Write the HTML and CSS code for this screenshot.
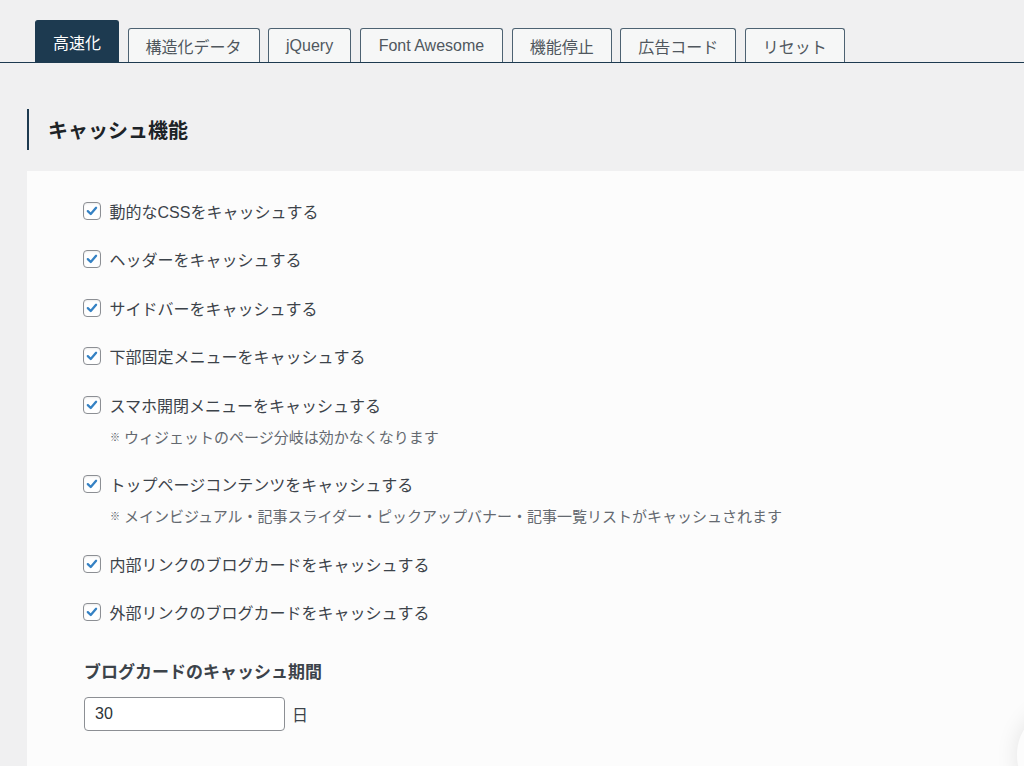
FILE: index.html
```html
<!DOCTYPE html>
<html lang="ja">
<head>
<meta charset="utf-8">
<title>キャッシュ機能</title>
<link rel="stylesheet" href="styles.css">
</head>
<body>
<nav class="tabs">
  <span class="tab is-active">高速化</span>
  <span class="tab">構造化データ</span>
  <span class="tab">jQuery</span>
  <span class="tab tab-wide">Font Awesome</span>
  <span class="tab">機能停止</span>
  <span class="tab">広告コード</span>
  <span class="tab">リセット</span>
</nav>

<h2 class="section-title">キャッシュ機能</h2>

<section class="panel">
  <div class="item">
    <label class="opt"><span class="cb"><svg viewBox="0 0 18 18"><path d="M4.3 9.2 L7.6 12.4 L13.6 5.4"/></svg></span>動的なCSSをキャッシュする</label>
  </div>
  <div class="item">
    <label class="opt"><span class="cb"><svg viewBox="0 0 18 18"><path d="M4.3 9.2 L7.6 12.4 L13.6 5.4"/></svg></span>ヘッダーをキャッシュする</label>
  </div>
  <div class="item">
    <label class="opt"><span class="cb"><svg viewBox="0 0 18 18"><path d="M4.3 9.2 L7.6 12.4 L13.6 5.4"/></svg></span>サイドバーをキャッシュする</label>
  </div>
  <div class="item">
    <label class="opt"><span class="cb"><svg viewBox="0 0 18 18"><path d="M4.3 9.2 L7.6 12.4 L13.6 5.4"/></svg></span>下部固定メニューをキャッシュする</label>
  </div>
  <div class="item">
    <label class="opt"><span class="cb"><svg viewBox="0 0 18 18"><path d="M4.3 9.2 L7.6 12.4 L13.6 5.4"/></svg></span>スマホ開閉メニューをキャッシュする</label>
    <p class="note"><span class="mark">※</span>ウィジェットのページ分岐は効かなくなります</p>
  </div>
  <div class="item">
    <label class="opt"><span class="cb"><svg viewBox="0 0 18 18"><path d="M4.3 9.2 L7.6 12.4 L13.6 5.4"/></svg></span>トップページコンテンツをキャッシュする</label>
    <p class="note"><span class="mark">※</span>メインビジュアル・記事スライダー・ピックアップバナー・記事一覧リストがキャッシュされます</p>
  </div>
  <div class="item">
    <label class="opt"><span class="cb"><svg viewBox="0 0 18 18"><path d="M4.3 9.2 L7.6 12.4 L13.6 5.4"/></svg></span>内部リンクのブログカードをキャッシュする</label>
  </div>
  <div class="item">
    <label class="opt"><span class="cb"><svg viewBox="0 0 18 18"><path d="M4.3 9.2 L7.6 12.4 L13.6 5.4"/></svg></span>外部リンクのブログカードをキャッシュする</label>
  </div>

  <h3 class="field-title">ブログカードのキャッシュ期間</h3>
  <div class="field">
    <span class="input">30</span><span class="unit">日</span>
  </div>
</section>

<div class="float-btn"></div>
</body>
</html>
```

FILE: styles.css
```css
html, body {
  margin: 0;
  padding: 0;
}

body {
  background: #f0f0f1;
  font-family: "Liberation Sans", "Noto Sans CJK JP", sans-serif;
  color: #3c434a;
  overflow: hidden;
  height: 766px;
}

.tabs {
  display: flex;
  align-items: flex-end;
  gap: 8.5px;
  margin-top: 20px;
  padding-left: 35px;
  border-bottom: 1px solid #1d3a50;
  height: 42px;
}

.tab {
  box-sizing: border-box;
  height: 34px;
  padding: 0 17px;
  display: flex;
  align-items: center;
  font-size: 16px;
  color: #50575e;
  background: #f6f7f7;
  border: 1px solid #4d6272;
  border-bottom: none;
  border-radius: 3px 3px 0 0;
  white-space: nowrap;
}

.tab-wide {
  padding: 0 18px;
}

.tab.is-active {
  height: 42px;
  background: #1d3a50;
  border-color: #1d3a50;
  color: #ffffff;
}

.section-title {
  margin: 46px 0 0 27px;
  height: 41px;
  box-sizing: border-box;
  border-left: 2px solid #1d3a50;
  padding-left: 19px;
  display: flex;
  align-items: center;
  font-size: 20px;
  font-weight: bold;
  color: #1d2327;
}

.panel {
  margin: 21px 0 0 27px;
  background: #fcfcfc;
  padding: 27.5px 0 0 56px;
  height: 567px;
}

.item {
  margin-bottom: 24.5px;
}

.opt {
  display: flex;
  align-items: center;
  height: 24px;
  font-size: 16px;
  color: #3c434a;
  white-space: nowrap;
}

.cb {
  box-sizing: border-box;
  width: 18px;
  height: 18px;
  border: 1px solid #8c8f94;
  border-radius: 4px;
  background: #ffffff;
  box-shadow: inset 0 1px 2px rgba(0, 0, 0, 0.08);
  margin-right: 9px;
  margin-left: -0.5px;
  flex: none;
  display: flex;
}

.cb svg {
  width: 16px;
  height: 16px;
}

.cb path {
  fill: none;
  stroke: #3582c4;
  stroke-width: 2.6;
  stroke-linecap: round;
  stroke-linejoin: round;
}

.note {
  margin: 7.5px 0 -0.5px 27px;
  height: 24px;
  display: flex;
  align-items: center;
  font-size: 15px;
  color: #646970;
  white-space: nowrap;
}

.note .mark {
  font-size: 10px;
  font-weight: bold;
  margin-right: 4px;
  color: #50575e;
}

.field-title {
  margin: 34px 0 0 1px;
  height: 24px;
  display: flex;
  align-items: center;
  font-size: 17px;
  font-weight: bold;
  color: #3c434a;
}

.field {
  margin-top: 15px;
  display: flex;
  align-items: center;
  margin-left: 1px;
}

.input {
  box-sizing: border-box;
  width: 201px;
  height: 34px;
  border: 1px solid #8c8f94;
  border-radius: 4px;
  background: #ffffff;
  padding: 0 10px;
  display: flex;
  align-items: center;
  font-size: 16px;
  color: #2c3338;
}

.unit {
  margin-left: 7px;
  font-size: 16px;
  color: #3c434a;
}

.float-btn {
  position: fixed;
  left: 1017px;
  top: 705px;
  width: 100px;
  height: 100px;
  border-radius: 50%;
  background: #fcfcfc;
  box-shadow: 0 0 22px rgba(0, 0, 0, 0.1);
}
```
